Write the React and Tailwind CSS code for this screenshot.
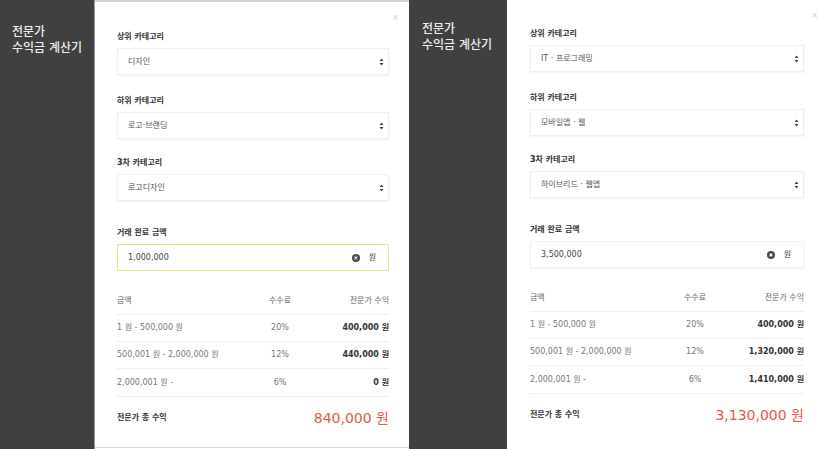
const tiers = ["1 원 - 500,000 원", "500,001 원 - 2,000,000 원", "2,000,001 원 -"];
const rates = ["20%", "12%", "6%"];

const SelectArrow = () => (
  <svg width="5" height="8" viewBox="0 0 5 8" className="shrink-0">
    <path d="M2.5 0.5 L4.5 3 L0.5 3 Z" fill="#444" />
    <path d="M2.5 7.5 L4.5 5 L0.5 5 Z" fill="#444" />
  </svg>
);

const ClearIcon = () => (
  <svg width="8" height="8" viewBox="0 0 8 8" className="shrink-0">
    <circle cx="4" cy="4" r="4" fill="#4a4a4a" />
    <path d="M2.6 2.6 L5.4 5.4 M5.4 2.6 L2.6 5.4" stroke="#fff" strokeWidth="1.1" />
  </svg>
);

const Label = ({ children, className = "" }) => (
  <div className={`h-[10px] text-[8px] leading-[10px] font-bold text-[#333] ${className}`}>{children}</div>
);

const SelectBox = ({ value }) => (
  <div className="mt-[6px] h-[27px] flex items-center justify-between pl-[10px] pr-[4px] bg-white border border-[#eeeeee] shadow-[0_1px_2px_rgba(0,0,0,0.05)]">
    <span className="text-[8px] text-[#555]">{value}</span>
    <SelectArrow />
  </div>
);

const Calculator = ({ cats, amount, profits, total, focused, sideW, padTop, titleTop, panelClass, wrapClass = "" }) => (
  <div className={`flex h-full ${wrapClass}`}>
    <div className={`${sideW} bg-[#404040] shrink-0 pl-[13px]`}>
      <div className={`${titleTop} text-[12px] leading-[16px] font-medium text-[#eeeeee]`}>
        <div>전문가</div>
        <div>수익금 계산기</div>
      </div>
    </div>
    <div className={`relative bg-white ${panelClass}`}>
      <span className="absolute right-[10px] top-[10px] text-[8px] text-[#c8c8c8]">×</span>
      <div className={padTop}>
        <Label>상위 카테고리</Label>
        <SelectBox value={cats[0]} />
        <Label className="mt-[21px]">하위 카테고리</Label>
        <SelectBox value={cats[1]} />
        <Label className="mt-[19px]">3차 카테고리</Label>
        <SelectBox value={cats[2]} />
        <Label className="mt-[27px]">거래 완료 금액</Label>
        <div
          className={`mt-[6px] h-[27px] flex items-center pl-[10px] pr-[12px] bg-white ${
            focused
              ? "border-[1.5px] border-[#ece38a]"
              : "border border-[#f2f2f2] shadow-[0_1px_2px_rgba(0,0,0,0.05)]"
          }`}
        >
          <span className="flex-1 text-[8px] text-[#444]">{amount}</span>
          <ClearIcon />
          <span className="ml-[9px] text-[8px] text-[#444]">원</span>
        </div>

        <div className="mt-[23px] grid grid-cols-[1fr_60px_79px] items-center h-[21px] border-b border-[#eeeeee] text-[8px] text-[#666] pb-[6px]">
          <span>금액</span>
          <span className="text-center">수수료</span>
          <span className="text-right">전문가 수익</span>
        </div>
        {tiers.map((t, i) => (
          <div
            key={t}
            className={`grid grid-cols-[1fr_60px_79px] items-center ${
              i === 2 ? "h-[28px]" : "h-[27px]"
            } border-b border-[#eeeeee] text-[8px]`}
          >
            <span className="text-[#777]">{t}</span>
            <span className="text-center text-[#777]">{rates[i]}</span>
            <span className="text-right font-bold text-[#333]">{profits[i]}</span>
          </div>
        ))}
        <div className="flex items-center justify-between h-[42px]">
          <span className="text-[8px] font-bold text-[#333]">전문가 총 수익</span>
          <span className="text-[14px] text-[#e2594a]">{total}</span>
        </div>
      </div>
    </div>
  </div>
);

export default function App() {
  return (
    <div className="w-[828px] h-[449px] flex bg-white overflow-hidden [font-family:'DejaVu_Sans','Noto_Sans_CJK_KR',sans-serif]">
      <Calculator
        cats={["디자인", "로고·브랜딩", "로고디자인"]}
        amount="1,000,000"
        profits={["400,000 원", "440,000 원", "0 원"]}
        total="840,000 원"
        focused
        sideW="w-[95px] border-r border-[#9a9a9a]"
        titleTop="pt-[24px] -ml-[1px]"
        padTop="pt-[30px]"
        panelClass="w-[314px] h-[448px] border-t-2 border-b border-[#d6d6d6] pl-[22px] pr-[20px]"
      />
      <Calculator
        cats={["IT · 프로그래밍", "모바일앱 · 웹", "하이브리드 · 웹앱"]}
        amount="3,500,000"
        profits={["400,000 원", "1,320,000 원", "1,410,000 원"]}
        total="3,130,000 원"
        sideW="w-[98px]"
        titleTop="pt-[21px]"
        padTop="pt-[29px]"
        panelClass="flex-1 pl-[23px] pr-[24px]"
        wrapClass="flex-1"
      />
    </div>
  );
}
